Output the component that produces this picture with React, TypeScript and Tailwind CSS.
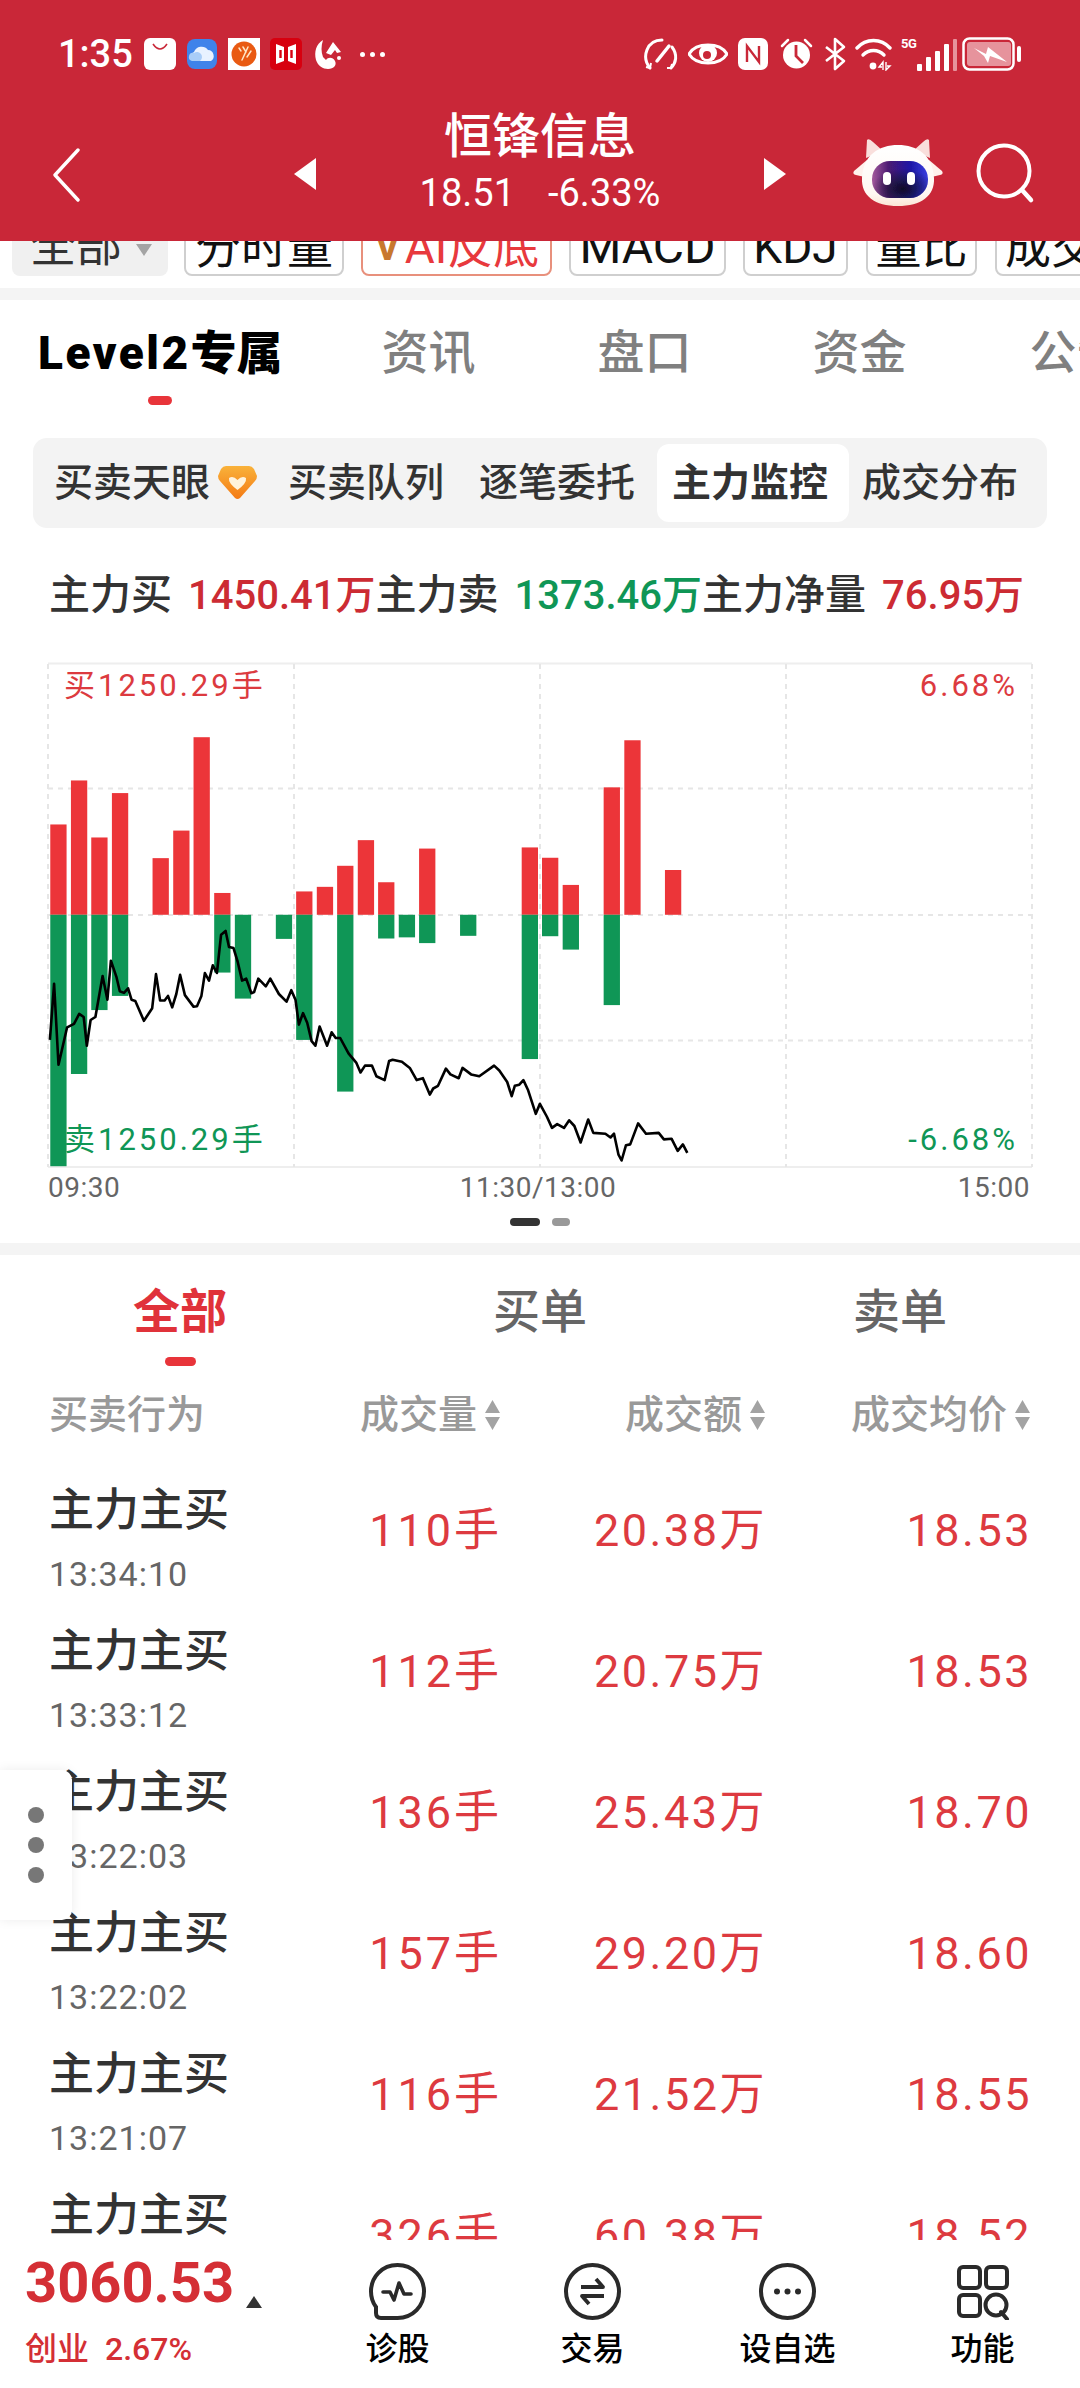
import React from "react";

const bars: [number, number | null, number | null][] = [
  [146, 482, 1375], [206, 367, 1134], [265, 516, 967], [325, 400, 930],
  [443, 570, null], [503, 498, null], [562, 254, null], [622, 661, 869],
  [682, null, 937], [801, null, 781], [860, 657, 1045], [920, 645, null],
  [979, 590, 1180], [1039, 523, null], [1098, 633, 780], [1158, null, 777],
  [1217, 545, 792], [1336, null, 773], [1515, 542, 1095],
  [1574, 569, 774], [1634, 640, 809], [1753, 385, 954], [1813, 262, null], [1931, 601, null],
];
const linePts: number[][] = [
  [145,1045],[157,898],[170,1110],[180,1070],[195,1012],[215,1003],[230,977],[243,985],[252,1060],[263,993],[277,985],[298,878],[312,940],[322,838],[338,880],[348,918],[360,922],[372,910],[382,940],[393,943],[418,995],[442,962],[453,873],[465,942],[478,942],[488,930],[500,960],[512,925],[523,875],[537,928],[562,958],[572,957],[585,930],[595,870],[607,890],[618,850],[630,870],[642,770],[655,760],[665,802],[678,805],[690,840],[703,890],[715,885],[730,923],[738,920],[750,885],[772,905],[785,885],[810,925],[832,945],[846,915],[858,940],[868,1005],[880,975],[892,1000],[905,1048],[916,1060],[928,1010],[950,1060],[963,1025],[975,1040],[988,1040],[1012,1080],[1035,1105],[1047,1130],[1060,1112],[1080,1112],[1093,1140],[1117,1150],[1130,1100],[1140,1097],[1167,1102],[1190,1118],[1210,1150],[1228,1145],[1248,1188],[1258,1172],[1272,1165],[1295,1120],[1308,1135],[1332,1145],[1343,1118],[1368,1135],[1392,1140],[1435,1112],[1450,1125],[1473,1155],[1486,1192],[1495,1165],[1508,1162],[1520,1150],[1533,1175],[1556,1238],[1568,1212],[1588,1245],[1603,1275],[1618,1265],[1638,1275],[1653,1255],[1668,1270],[1686,1313],[1708,1253],[1723,1288],[1758,1290],[1773,1300],[1783,1290],[1796,1345],[1805,1360],[1818,1320],[1830,1318],[1853,1263],[1876,1290],[1913,1288],[1928,1305],[1950,1303],[1968,1335],[1983,1318],[1996,1340],
];
const X = (z: number) => z / 2.904;
const Y = (z: number) => z / 2.613;
const MID = 718;

function Chart() {
  const grid = "#e6e6e6";
  return (
    <svg width="1080" height="530" viewBox="0 0 1080 530" className="block">
      <line x1="48" x2="1032" y1="23.5" y2="23.5" stroke="#eeeeee" strokeWidth="2" />
      <line x1="48" x2="1032" y1="527" y2="527" stroke="#eeeeee" strokeWidth="2" />
      {[148.5, 275, 400.5].map((y) => (
        <line key={y} x1="48" x2="1032" y1={y} y2={y} stroke={grid} strokeWidth="2" strokeDasharray="5 5" />
      ))}
      {[48, 294, 540, 786, 1032].map((x) => (
        <line key={x} x1={x} x2={x} y1="24" y2="527" stroke={grid} strokeWidth="2" strokeDasharray="5 5" />
      ))}
      {bars.map(([x, top, bottom]) => (
        <g key={x}>
          {top !== null && <rect x={X(x)} y={Y(top)} width="16.3" height={Y(MID) - Y(top)} fill="#ec3539" />}
          {bottom !== null && <rect x={X(x)} y={Y(MID)} width="16.3" height={Y(bottom) - Y(MID)} fill="#0f9656" />}
        </g>
      ))}
      <polyline
        points={linePts.map(([x, y]) => `${X(x).toFixed(1)},${Y(y).toFixed(1)}`).join(" ")}
        fill="none"
        stroke="#000"
        strokeWidth="2.6"
        strokeLinejoin="round"
      />
    </svg>
  );
}

function Mascot() {
  return (
    <svg width="90" height="70" viewBox="0 0 90 70">
      <defs>
        <linearGradient id="fl" x1="0" y1="0" x2="1" y2="0">
          <stop offset="0" stopColor="#a45a9c" />
          <stop offset="0.3" stopColor="#4a1a72" />
          <stop offset="0.7" stopColor="#1d18a8" />
          <stop offset="1" stopColor="#3b3fe0" />
        </linearGradient>
        <radialGradient id="fd" cx="0.55" cy="0.75" r="0.55">
          <stop offset="0" stopColor="#0e0e22" stopOpacity="0.95" />
          <stop offset="1" stopColor="#0e0e22" stopOpacity="0" />
        </radialGradient>
        <linearGradient id="hd" x1="0" y1="0" x2="0" y2="1">
          <stop offset="0" stopColor="#ffffff" />
          <stop offset="0.8" stopColor="#fff8f2" />
          <stop offset="1" stopColor="#fbe6d6" />
        </linearGradient>
        <filter id="sf"><feGaussianBlur stdDeviation="0.7" /></filter>
      </defs>
      <g filter="url(#sf)">
        <path d="M13 20 L14 2 Q16 0 20 4 L30 13 Z" fill="#f9dfdc" />
        <path d="M77 20 L76 2 Q74 0 70 4 L60 13 Z" fill="#f9dfdc" />
        <path d="M14 22 L1 33 Q-1 36 3 37 L16 40 Z" fill="#fff1ec" />
        <path d="M76 22 L89 33 Q91 36 87 37 L74 40 Z" fill="#fff1ec" />
        <path d="M45 7 C64 7 80 17 81 40 C82 58 68 68 45 68 C22 68 8 58 9 40 C10 17 26 7 45 7Z" fill="url(#hd)" />
        <rect x="19" y="23" width="56" height="37" rx="18" fill="url(#fl)" />
        <rect x="19" y="23" width="56" height="37" rx="18" fill="url(#fd)" />
      </g>
      <rect x="30" y="34" width="8" height="13" rx="4" fill="#fff" />
      <rect x="54" y="34" width="8" height="13" rx="4" fill="#fff" />
    </svg>
  );
}

function LeftStatusIcons() {
  return (
    <div className="flex items-center ml-[11px]">
      <svg width="32" height="32" viewBox="0 0 32 32">
        <rect width="32" height="32" rx="6" fill="#fff" />
        <path d="M9 6 Q16 16 23 6" fill="none" stroke="#c92738" strokeWidth="1.6" />
      </svg>
      <svg width="30" height="30" viewBox="0 0 30 30" className="ml-[11px]">
        <rect width="30" height="30" rx="8" fill="#3f83ea" />
        <path d="M6 22 a5 5 0 0 1 1-9 a8 8 0 0 1 14-2 a6 6 0 0 1 3 11Z" fill="#e8f2ff" />
        <path d="M5 22 a4 4 0 0 1 2-8 a5 5 0 0 1 6 8Z" fill="#a9cdf8" />
      </svg>
      <svg width="32" height="32" viewBox="0 0 32 32" className="ml-[11px]">
        <rect width="32" height="32" fill="#fff" />
        <circle cx="16" cy="16" r="12.5" fill="#e95a12" />
        <path d="M11 10 l2 3 M15 9 l3 5 M20 9 L14 22 M23 13 l-4 6" stroke="#ffe7c8" strokeWidth="1.5" strokeLinecap="round" />
      </svg>
      <svg width="32" height="32" viewBox="0 0 32 32" className="ml-[10px]">
        <rect width="32" height="32" rx="5" fill="#d7000f" />
        <path d="M6 6 L14 9 V23 L6 26Z M26 6 L18 9 V23 L26 26Z" fill="#fff" />
        <path d="M10.5 12 V20 M21.5 12 V20" stroke="#d7000f" strokeWidth="2.4" />
      </svg>
      <svg width="28" height="32" viewBox="0 0 28 32" className="ml-[12px]">
        <path d="M9 2 C2 6 0 14 2 22 C4 28 9 31 14 31 C20 31 23 27 21 23 C19 19 14 19 12 22 L9 19 C7 14 7 8 9 2Z" fill="#fff" />
        <path d="M12 15 L19 4 L27 14 L23 15 L21 12 L17 17Z" fill="#fff" />
        <circle cx="25" cy="20" r="2" fill="#fff" />
      </svg>
      <div className="flex gap-[5px] ml-[18px]">
        <span className="w-[5px] h-[5px] rounded-full bg-white" />
        <span className="w-[5px] h-[5px] rounded-full bg-white" />
        <span className="w-[5px] h-[5px] rounded-full bg-white" />
      </div>
    </div>
  );
}

function RightStatusIcons() {
  return (
    <div className="flex items-center text-white">
      <svg width="35" height="34" viewBox="0 0 35 34" fill="none" stroke="#fff" strokeWidth="3">
        <path d="M7 31 C-2 20 4 3 19 3" strokeLinecap="round" />
        <path d="M29 10 C35 18 33 26 28 31" strokeLinecap="round" />
        <path d="M14 24 L26 9" strokeWidth="3.5" strokeLinecap="round" />
        <path d="M3 30 L7 31 L8 26 M24 31 L28 31 L29 27" strokeWidth="2" />
      </svg>
      <svg width="40" height="28" viewBox="0 0 40 28" className="ml-[10px]">
        <path d="M1 14 C8 2 32 2 39 14 C32 26 8 26 1 14Z" fill="none" stroke="#fff" strokeWidth="3" />
        <circle cx="20" cy="13" r="9" fill="#fff" />
        <circle cx="19" cy="15" r="4" fill="#c92738" />
      </svg>
      <svg width="30" height="32" viewBox="0 0 30 32" className="ml-[10px]">
        <rect width="30" height="32" rx="7" fill="#fff" />
        <path d="M9 24 V8 L21 24 V8" fill="none" stroke="#c92738" strokeWidth="2.4" />
      </svg>
      <svg width="33" height="34" viewBox="0 0 33 34" className="ml-[12px]">
        <circle cx="16.5" cy="18" r="13.5" fill="#fff" />
        <path d="M16 8 V19 L23 26" fill="none" stroke="#c92738" strokeWidth="2.8" />
        <path d="M2 9 L8 3 M31 9 L25 3" stroke="#fff" strokeWidth="2.5" strokeLinecap="round" />
      </svg>
      <svg width="22" height="34" viewBox="0 0 22 34" fill="none" stroke="#fff" strokeWidth="2.6" className="ml-[11px]">
        <path d="M2 10 L20 24 L11 32 V2 L20 10 L2 24" strokeLinejoin="round" />
      </svg>
      <svg width="37" height="34" viewBox="0 0 37 34" fill="none" stroke="#fff" className="ml-[9px]">
        <path d="M2 11 C11 1 26 1 35 11" strokeWidth="3.4" strokeLinecap="round" />
        <path d="M8 18 C14 12 23 12 29 18" strokeWidth="3.4" strokeLinecap="round" />
        <circle cx="18" cy="29" r="3.4" fill="#fff" stroke="none" />
        <path d="M28 33 V25 L24 30 H27 M31 25 V33 L35 29 H32" strokeWidth="1.4" />
      </svg>
      <div className="relative w-[49px] h-[34px] ml-[9px]">
        <span className="absolute left-0 top-[-1px] text-[13px] leading-[16px] font-bold tracking-[-0.5px]">5G</span>
        <div className="absolute left-[16px] bottom-[0px] flex items-end gap-[4px]">
          <span className="w-[5px] h-[7px] bg-white rounded-[1px]" />
          <span className="w-[5px] h-[14px] bg-white rounded-[1px]" />
          <span className="w-[5px] h-[20px] bg-white rounded-[1px]" />
          <span className="w-[5px] h-[27px] bg-white rounded-[1px]" />
          <span className="w-[4px] h-[32px] bg-[#e6939c] rounded-[1px]" />
        </div>
      </div>
      <svg width="60" height="34" viewBox="0 0 60 34" className="ml-[12px]">
        <rect x="1.5" y="1.5" width="50" height="31" rx="6" fill="none" stroke="#fff" strokeWidth="2.5" />
        <rect x="5" y="5" width="44" height="24" rx="3" fill="#e6939c" />
        <path d="M12 11 L24 17 L26 10 L45 25 L28 19 L26 26 L22 19Z" fill="#fff" />
        <rect x="55" y="9" width="4" height="16" rx="2" fill="#fff" />
      </svg>
    </div>
  );
}

function Header() {
  return (
    <header className="relative z-10 h-[241px] bg-[#c92738] text-white shrink-0">
      <div className="flex items-center justify-between h-[108px] pl-[58px] pr-[58px]">
        <div className="flex items-center">
          <span className="text-[38px] leading-[40px] font-medium">1:35</span>
          <LeftStatusIcons />
        </div>
        <RightStatusIcons />
      </div>
      <div className="flex items-center h-[133px] pl-[52px]">
        <svg width="28" height="54" viewBox="0 0 28 54" fill="none">
          <path d="M26 2 L3 27 L26 52" stroke="#fff" strokeWidth="3.4" strokeLinecap="round" strokeLinejoin="round" />
        </svg>
        <svg width="22" height="32" viewBox="0 0 22 32" className="ml-[214px] mt-[-1px]">
          <path d="M22 0 V32 L0 16Z" fill="#fff" />
        </svg>
        <div className="w-[448px] flex flex-col items-center mt-[-25px]">
          <span className="text-[48px] leading-[54px] font-medium">恒锋信息</span>
          <div className="flex text-[38px] leading-[42px] mt-[8px]">
            <span>18.51</span>
            <span className="ml-[33px]">-6.33%</span>
          </div>
        </div>
        <svg width="22" height="32" viewBox="0 0 22 32" className="mt-[-1px]">
          <path d="M0 0 V32 L22 16Z" fill="#fff" />
        </svg>
        <div className="ml-[67px] mt-[-4px]"><Mascot /></div>
        <svg width="62" height="62" viewBox="0 0 62 62" fill="none" className="ml-[32px] mt-[-2px]">
          <circle cx="29" cy="28" r="25.5" stroke="#fff" strokeWidth="4" />
          <path d="M47 47 L56 57" stroke="#fff" strokeWidth="4.5" strokeLinecap="round" />
        </svg>
      </div>
    </header>
  );
}

function IndicatorRow() {
  return (
    <div className="h-[47px] overflow-hidden shrink-0 bg-white">
      <div className="flex items-start mt-[-25px] pl-[12px] text-[46px] leading-[58px] text-[#111] whitespace-nowrap">
        <div className="relative shrink-0 w-[156px] h-[60px] bg-[#f0f0f0] rounded-[8px] pl-[18px] text-[#333]">
          全部
          <svg width="16" height="12" viewBox="0 0 16 12" className="absolute left-[124px] top-[28px]">
            <path d="M0 0 H16 L8 12Z" fill="#a4a4a4" />
          </svg>
        </div>
        <div className="shrink-0 w-[160px] h-[60px] ml-[16px] border-2 border-[#cfcfcf] rounded-[8px] text-center">分时量</div>
        <div className="shrink-0 flex w-[191px] h-[60px] ml-[17px] border-2 border-[#e8907c] rounded-[8px] pl-[12px] text-[#e8393d]">
          <span className="text-[#c8782e] font-bold text-[38px] mr-[5px]">V</span><span>AI反底</span>
        </div>
        <div className="shrink-0 w-[157px] h-[60px] ml-[17px] border-2 border-[#cfcfcf] rounded-[8px] text-center text-[48px]">MACD</div>
        <div className="shrink-0 w-[105px] h-[60px] ml-[17px] border-2 border-[#cfcfcf] rounded-[8px] text-center">KDJ</div>
        <div className="shrink-0 w-[111px] h-[60px] ml-[18px] border-2 border-[#cfcfcf] rounded-[8px] text-center">量比</div>
        <div className="shrink-0 w-[120px] h-[60px] ml-[18px] border-2 border-[#cfcfcf] rounded-[8px] pl-[8px]">成交</div>
      </div>
    </div>
  );
}

function TopTabs() {
  return (
    <div className="flex items-start h-[138px] pt-[23px] pl-[38px] overflow-hidden whitespace-nowrap text-[47px] leading-[60px] font-medium text-[#808080]">
      <div className="flex flex-col items-center shrink-0 text-[46px]">
        <span className="text-black font-black"><span className="tracking-[2.5px]">Level2</span>专属</span>
        <span className="w-[24px] h-[9px] rounded-full bg-[#e8343a] mt-[13px]" />
      </div>
      <span className="ml-[99px] shrink-0">资讯</span>
      <span className="ml-[122px] shrink-0">盘口</span>
      <span className="ml-[121px] shrink-0">资金</span>
      <span className="ml-[123px] shrink-0">公告</span>
    </div>
  );
}

function Segment() {
  return (
    <div className="flex items-center ml-[33px] w-[1014px] h-[90px] rounded-[14px] bg-[#f3f3f3] px-[6px] text-[39px] font-medium text-[#333] whitespace-nowrap">
      <div className="flex items-center w-[231px] h-[78px] pl-[15px]">
        买卖天眼
        <svg width="39" height="34" viewBox="0 0 39 34" className="ml-[8px]">
          <defs>
            <linearGradient id="bd" x1="0" y1="0" x2="0" y2="1">
              <stop offset="0" stopColor="#f9b23a" />
              <stop offset="1" stopColor="#f47a14" />
            </linearGradient>
          </defs>
          <path d="M8 0 H31 Q34 0 36 3 L39 10 Q39 13 37 15 L22 32 Q19.5 34 17 32 L2 15 Q0 13 0 10 L3 3 Q5 0 8 0Z" fill="url(#bd)" />
          <path d="M11 12 Q15 9 19.5 14 Q24 9 28 12 Q29 17 19.5 24 Q10 17 11 12Z" fill="#fff3dc" />
        </svg>
      </div>
      <div className="w-[192px] pl-[18px]">买卖队列</div>
      <div className="w-[195px] pl-[17px]">逐笔委托</div>
      <div className="w-[192px] h-[78px] leading-[78px] pl-[15px] bg-white rounded-[12px] font-bold">主力监控</div>
      <div className="w-[192px] pl-[13px]">成交分布</div>
    </div>
  );
}

function Summary() {
  return (
    <div className="flex items-center h-[112px] pt-[24px] pl-[49px] text-[41px] font-medium text-[#333] whitespace-nowrap">
      <span>主力买</span>
      <span className="ml-[16px] text-[40px] text-[#cc2b33]">1450.41万</span>
      <span>主力卖</span>
      <span className="ml-[16px] text-[40px] text-[#0f9656]">1373.46万</span>
      <span>主力净量</span>
      <span className="ml-[16px] text-[40px] text-[#cc2b33]">76.95万</span>
    </div>
  );
}

function ChartBlock() {
  return (
    <div className="relative">
      <Chart />
      <span className="absolute left-[64px] top-[26px] text-[31px] leading-[40px] tracking-[3px] text-[#dc3a3f]">买1250.29手</span>
      <span className="absolute right-[62px] top-[26px] text-[31px] leading-[40px] tracking-[3px] text-[#dc3a3f]">6.68%</span>
      <span className="absolute left-[64px] top-[480px] text-[31px] leading-[40px] tracking-[3px] text-[#0f9656]">卖1250.29手</span>
      <span className="absolute right-[62px] top-[480px] text-[31px] leading-[40px] tracking-[3px] text-[#0f9656]">-6.68%</span>
      <div className="flex justify-between h-[36px] pl-[48px] pr-[50px] text-[28px] leading-[36px] tracking-[0.5px] text-[#666]">
        <span>09:30</span>
        <span className="ml-[-2px]">11:30/13:00</span>
        <span>15:00</span>
      </div>
      <div className="flex justify-center gap-[12px] mt-[12px]">
        <span className="w-[30px] h-[8px] rounded-full bg-[#333]" />
        <span className="w-[18px] h-[8px] rounded-full bg-[#999]" />
      </div>
      <div className="h-[17px]" />
    </div>
  );
}

function SortArrows() {
  return (
    <svg width="17" height="30" viewBox="0 0 17 30" className="ml-[7px] shrink-0">
      <path d="M8.5 0 L16 13 H1Z M8.5 30 L1 17 H16Z" fill="#a3a3a3" />
    </svg>
  );
}

const rows = [
  ["13:34:10", "110手", "20.38万", "18.53"],
  ["13:33:12", "112手", "20.75万", "18.53"],
  ["13:22:03", "136手", "25.43万", "18.70"],
  ["13:22:02", "157手", "29.20万", "18.60"],
  ["13:21:07", "116手", "21.52万", "18.55"],
  ["13:20:31", "326手", "60.38万", "18.52"],
];

function TradeTable() {
  return (
    <div className="relative flex-1 min-h-0 overflow-hidden">
      <div className="grid grid-cols-3 pt-[27px] text-[47px] leading-[60px] text-[#666] font-medium text-center">
        <div className="flex flex-col items-center">
          <span className="font-bold text-[#e0323a]">全部</span>
          <span className="w-[31px] h-[9px] rounded-full bg-[#e8343a] mt-[15px]" />
        </div>
        <div>买单</div>
        <div>卖单</div>
      </div>
      <div className="flex items-center h-[40px] mt-[29px] text-[39px] font-medium text-[#999] whitespace-nowrap">
        <div className="w-[250px] pl-[49px]">买卖行为</div>
        <div className="flex items-center justify-end w-[251px]">成交量<SortArrows /></div>
        <div className="flex items-center justify-end w-[265px]">成交额<SortArrows /></div>
        <div className="flex items-center justify-end w-[265px]">成交均价<SortArrows /></div>
      </div>
      <div className="mt-[46px]">
        {rows.map((r) => (
          <div key={r[0]} className="flex items-start h-[141px] whitespace-nowrap">
            <div className="w-[250px] pl-[49px]">
              <div className="text-[45px] leading-[60px] font-medium text-[#333]">主力主买</div>
              <div className="text-[34px] leading-[44px] mt-[11px] tracking-[1px] text-[#666]">{r[0]}</div>
            </div>
            <div className="w-[252px] pt-[20px] text-right text-[45px] leading-[60px] tracking-[3px] text-[#dd3a40]">{r[1]}</div>
            <div className="w-[265px] pt-[20px] text-right text-[45px] leading-[60px] tracking-[2.5px] text-[#dd3a40]">{r[2]}</div>
            <div className="w-[265px] pt-[20px] text-right text-[45px] leading-[60px] tracking-[2.5px] text-[#dd3a40]">{r[3]}</div>
          </div>
        ))}
      </div>
    </div>
  );
}

function NavItem({ label, icon }: { label: string; icon: React.ReactNode }) {
  return (
    <div className="w-[195px] flex flex-col items-center pt-[23px]">
      {icon}
      <span className="mt-[9px] text-[32px] leading-[40px] text-black font-medium">{label}</span>
    </div>
  );
}

function BottomBar() {
  const s = { fill: "none", stroke: "#2a2a2a", strokeWidth: 4 };
  return (
    <div className="flex h-[148px] shrink-0 bg-white whitespace-nowrap">
      <div className="w-[300px] pt-[13px] pl-[25px]">
        <div className="flex items-end h-[60px]">
          <span className="text-[56px] leading-[60px] font-bold text-[#d42f35]">3060.53</span>
          <svg width="16" height="12" viewBox="0 0 16 12" className="ml-[12px] mb-[5px]">
            <path d="M8 0 L16 12 H0Z" fill="#333" />
          </svg>
        </div>
        <div className="flex items-center h-[40px] mt-[16px] text-[32px] font-medium text-[#d42f35]">
          <span>创业</span>
          <span className="ml-[16px]">2.67%</span>
        </div>
      </div>
      <NavItem
        label="诊股"
        icon={
          <svg width="57" height="57" viewBox="0 0 57 57">
            <path d="M28.5 2 C13 2 2 14 2 28.5 C2 35 4 40 7 44 L7 50 Q7 55 12 55 L28.5 55 C44 55 55 43 55 28.5 C55 14 44 2 28.5 2Z" {...s} />
            <path d="M14 29 H21 L25 37 L30 20 L35 31 H42" {...s} strokeWidth="3.6" strokeLinejoin="round" strokeLinecap="round" />
          </svg>
        }
      />
      <NavItem
        label="交易"
        icon={
          <svg width="57" height="57" viewBox="0 0 57 57">
            <circle cx="28.5" cy="28.5" r="26.5" {...s} />
            <path d="M17 24 H39 L32 16" {...s} strokeWidth="3.8" strokeLinejoin="round" />
            <path d="M40 33 H18 L25 41" {...s} strokeWidth="3.8" strokeLinejoin="round" />
          </svg>
        }
      />
      <NavItem
        label="设自选"
        icon={
          <svg width="57" height="57" viewBox="0 0 57 57">
            <circle cx="28.5" cy="28.5" r="26.5" {...s} />
            <circle cx="18" cy="28.5" r="3" fill="#2a2a2a" />
            <circle cx="28.5" cy="28.5" r="3" fill="#2a2a2a" />
            <circle cx="39" cy="28.5" r="3" fill="#2a2a2a" />
          </svg>
        }
      />
      <NavItem
        label="功能"
        icon={
          <svg width="57" height="57" viewBox="0 0 57 57">
            <rect x="5" y="4" width="21" height="21" rx="4" {...s} />
            <rect x="32" y="4" width="21" height="21" rx="4" {...s} />
            <rect x="5" y="32" width="21" height="21" rx="4" {...s} />
            <circle cx="42" cy="42" r="10.5" {...s} />
            <path d="M47 49 L53 56" {...s} strokeLinecap="round" />
          </svg>
        }
      />
    </div>
  );
}

export default function App() {
  return (
    <div className="relative flex flex-col w-[1080px] h-[2388px] overflow-hidden bg-white font-[Roboto,'Noto_Sans_CJK_SC',sans-serif]">
      <Header />
      <IndicatorRow />
      <div className="h-[12px] bg-[#f4f4f4] shrink-0" />
      <TopTabs />
      <Segment />
      <Summary />
      <ChartBlock />
      <div className="h-[12px] bg-[#f4f4f4] shrink-0" />
      <TradeTable />
      <BottomBar />
      <div className="absolute left-0 top-[1770px] flex flex-col items-center gap-[14px] pt-[37px] w-[72px] h-[150px] bg-white rounded-r-[10px] shadow-[0_0_12px_rgba(0,0,0,0.08)]">
        <span className="w-[16px] h-[16px] rounded-full bg-[#777]" />
        <span className="w-[16px] h-[16px] rounded-full bg-[#777]" />
        <span className="w-[16px] h-[16px] rounded-full bg-[#777]" />
      </div>
    </div>
  );
}
